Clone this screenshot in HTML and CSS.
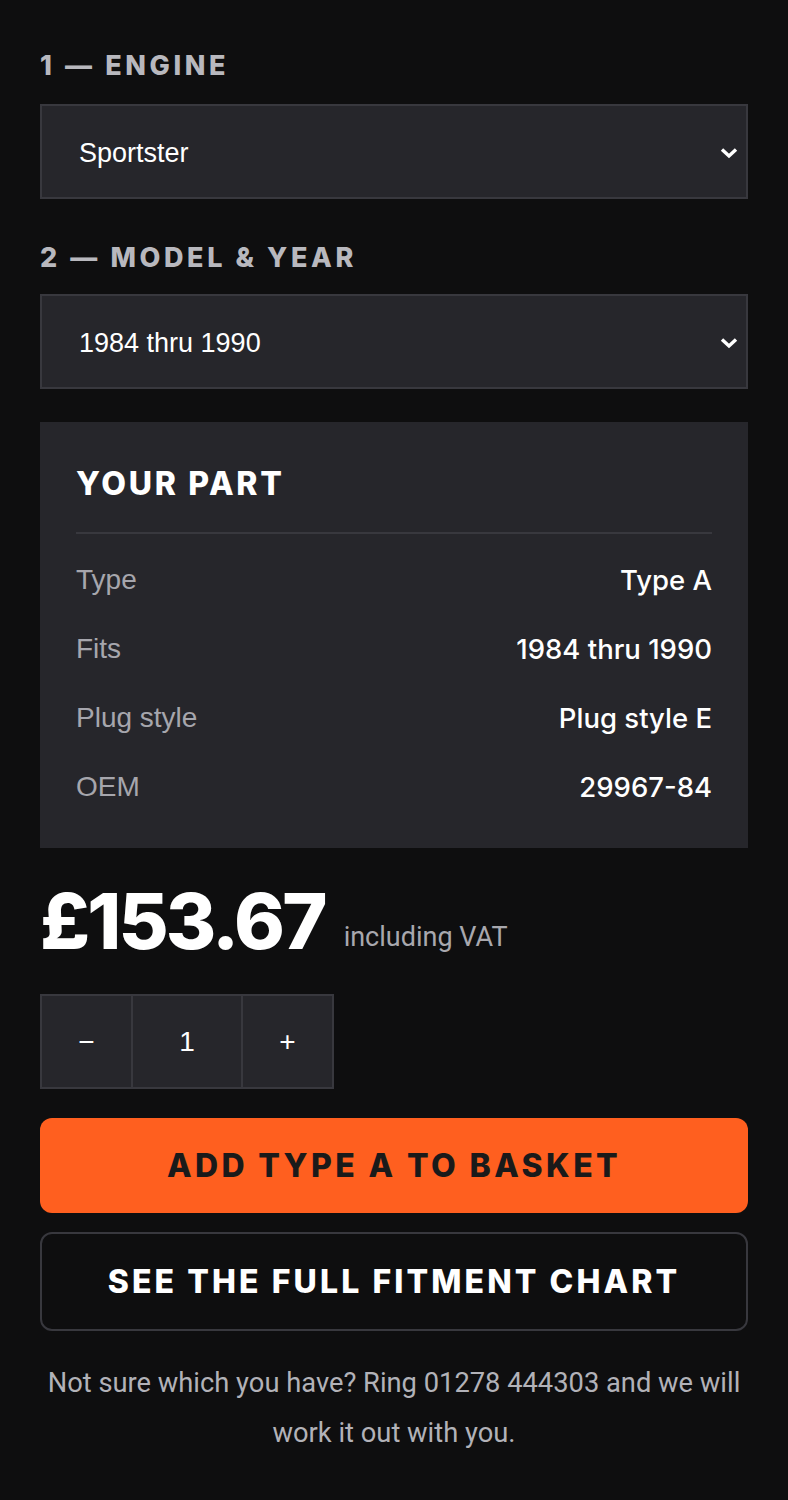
FILE: index.html
```html
<!DOCTYPE html>
<html lang="en">
<head>
  <meta charset="UTF-8">
  <meta name="viewport" content="width=device-width, initial-scale=1.0">
  <title>Fitment selector</title>
  <link rel="stylesheet" href="styles.css">
</head>
<body>

  <div class="fitment">
    <!-- Step 1 -->
    <div class="step-label">1 — Engine</div>
    <div class="select-box">
      <span>Sportster</span>
      <svg class="chev" width="18" height="12" viewBox="0 0 18 12"><polyline points="2,2.5 9,9 16,2.5" fill="none" stroke="#fff" stroke-width="3.4"/></svg>
    </div>

    <!-- Step 2 -->
    <div class="step-label step-two">2 — Model &amp; Year</div>
    <div class="select-box">
      <span>1984 thru 1990</span>
      <svg class="chev" width="18" height="12" viewBox="0 0 18 12"><polyline points="2,2.5 9,9 16,2.5" fill="none" stroke="#fff" stroke-width="3.4"/></svg>
    </div>

    <!-- Part card -->
    <div class="part-card">
      <h3>Your part</h3>
      <div class="part-rows">
        <div class="part-row"><span class="k">Type</span><span class="v">Type A</span></div>
        <div class="part-row"><span class="k">Fits</span><span class="v">1984 thru 1990</span></div>
        <div class="part-row"><span class="k">Plug style</span><span class="v">Plug style E</span></div>
        <div class="part-row"><span class="k">OEM</span><span class="v">29967-84</span></div>
      </div>
    </div>

    <div class="price-row">
      <span class="price">£153.67</span>
      <span class="vat">including VAT</span>
    </div>

    <div class="qty">
      <button class="qty-btn">−</button>
      <div class="qty-val">1</div>
      <button class="qty-btn">+</button>
    </div>

    <button class="btn-basket">Add Type A to basket</button>
    <button class="btn-chart">See the full fitment chart</button>

    <p class="help">Not sure which you have? Ring 01278 444303 and we will work it out with you.</p>
  </div>

</body>
</html>
```

FILE: styles.css
```css
body, html {
  margin: 0;
  padding: 0;
  background: #0e0e0f;
  color: #fff;
  font-family: 'Liberation Sans', Arial, sans-serif;
}

.fitment {
  display: flex;
  flex-direction: column;
  padding: 48px 40px 40px;
}

.step-label {
  font-family: 'Inter', sans-serif;
  font-weight: 800;
  font-size: 27px;
  line-height: 36px;
  letter-spacing: 3.6px;
  text-transform: uppercase;
  color: #b8b8be;
  margin-bottom: 20px;
}

.step-two {
  margin-top: 41px;
  margin-bottom: 18px;
}

.select-box {
  height: 95px;
  box-sizing: border-box;
  border: 2px solid #38383e;
  background: #26262b;
  display: flex;
  align-items: center;
  justify-content: space-between;
  padding: 3px 8px 0 37px;
  font-size: 27px;
  color: #fff;
}

.part-card {
  margin-top: 33px;
  background: #26262b;
  padding: 42px 36px 27px;
}

.part-card h3 {
  margin: 0;
  font-family: 'Inter', sans-serif;
  font-weight: 800;
  font-size: 32px;
  line-height: 40px;
  letter-spacing: 2.7px;
  text-transform: uppercase;
  padding-bottom: 28px;
  border-bottom: 2px solid #38383e;
}

.part-rows {
  padding-top: 11px;
}

.part-row {
  display: flex;
  justify-content: space-between;
  align-items: center;
  height: 69px;
  font-size: 28px;
}

.part-row .k {
  color: #a6a6ad;
}

.part-row .v {
  font-family: 'Inter', sans-serif;
  font-weight: 500;
  font-size: 27.5px;
}

.price-row {
  display: flex;
  align-items: baseline;
  gap: 19px;
  margin-top: 30px;
}

.price {
  font-family: 'Inter', sans-serif;
  font-weight: 800;
  font-size: 77px;
  line-height: 86px;
  letter-spacing: -2.8px;
}

.vat {
  font-family: 'Roboto', sans-serif;
  font-size: 27px;
  color: #a8a8ae;
  position: relative;
  top: -3px;
}

.qty {
  margin-top: 30px;
  display: flex;
  align-self: flex-start;
  border: 2px solid #38383e;
  background: #26262b;
  height: 95px;
  box-sizing: border-box;
}

.qty-btn, .qty-val {
  background: none;
  border: none;
  color: #fff;
  font-family: 'Liberation Sans', Arial, sans-serif;
  font-size: 28px;
  display: flex;
  align-items: center;
  justify-content: center;
}

.qty-btn {
  width: 89px;
  cursor: pointer;
}

.qty-val {
  width: 108px;
  border-left: 2px solid #38383e;
  border-right: 2px solid #38383e;
}

.btn-basket, .btn-chart {
  width: 100%;
  border-radius: 12px;
  font-family: 'Inter', sans-serif;
  font-weight: 800;
  font-size: 32px;
  letter-spacing: 3.4px;
  text-transform: uppercase;
  cursor: pointer;
}

.btn-basket {
  margin-top: 29px;
  height: 95px;
  border: none;
  background: #ff5f1f;
  color: #1a1a1a;
}

.btn-chart {
  margin-top: 19px;
  height: 99px;
  border: 2px solid #38383e;
  background: transparent;
  color: #fff;
  letter-spacing: 3.1px;
}

.help {
  margin: 27px 0 0;
  text-align: center;
  font-family: 'Roboto', sans-serif;
  font-size: 27.3px;
  line-height: 50px;
  color: #b2b2b8;
}
```
